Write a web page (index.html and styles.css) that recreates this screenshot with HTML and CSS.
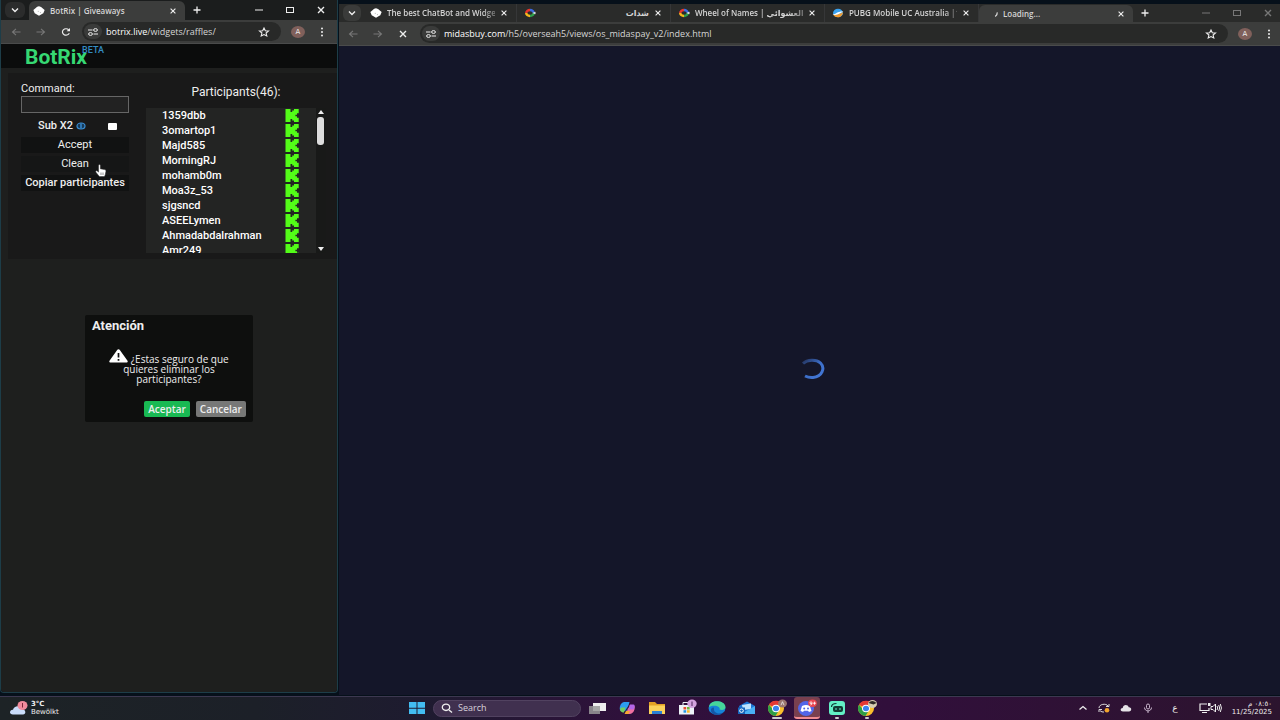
FILE: index.html
```html
<!DOCTYPE html>
<html lang="en">
<head>
<meta charset="utf-8">
<title>BotRix | Giveaways</title>
<link rel="stylesheet" href="styles.css">
</head>
<body>
<svg class="defs" aria-hidden="true">
  <symbol id="chev" viewBox="0 0 10 10"><path d="M2 3.5 5 6.500 8 3.500" fill="none" stroke="currentColor" stroke-width="1.400"/></symbol>
  <symbol id="cube" viewBox="0 0 10 10"><path d="M3.500 1.500 5 1l1.700.6L9.700 4.200 8.600 6.800 5 9 1.400 6.800.3 4.200z" fill="#fff"/><path d="M4 5.300h.8M5.800 6.300h.8" stroke="#999" stroke-width=".6"/></symbol>
  <symbol id="x" viewBox="0 0 10 10"><path d="m2 2 6 6M8 2 2 8" fill="none" stroke="currentColor" stroke-width="1.400"/></symbol>
  <symbol id="plus" viewBox="0 0 10 10"><path d="M5 1.500v7M1.500 5h7" fill="none" stroke="currentColor" stroke-width="1.300"/></symbol>
  <symbol id="min" viewBox="0 0 10 10"><path d="M1 5h8" stroke="currentColor" stroke-width="1"/></symbol>
  <symbol id="max" viewBox="0 0 10 10"><rect x="1.500" y="2.500" width="7" height="5" fill="none" stroke="currentColor"/></symbol>
  <symbol id="back" viewBox="0 0 10 10"><path d="M9.500 5H1.500M5 1.800 1.500 5 5 8.200" fill="none" stroke="currentColor" stroke-width="1.100"/></symbol>
  <symbol id="fwd" viewBox="0 0 10 10"><path d="M.5 5h8M5 1.800 8.500 5 5 8.200" fill="none" stroke="currentColor" stroke-width="1.100"/></symbol>
  <symbol id="reload" viewBox="0 0 10 10"><path d="M8.300 6.300A3.600 3.200 0 1 1 7.700 2.800" fill="none" stroke="currentColor" stroke-width="1.200"/><path d="M9 1v3.300H5.600z" fill="currentColor"/></symbol>
  <symbol id="tune" viewBox="0 0 12 10"><path d="M1 3h4.500M6.500 7H11" stroke="currentColor" stroke-width="1.200"/><ellipse cx="8.500" cy="3" rx="1.900" ry="1.400" fill="none" stroke="currentColor"/><ellipse cx="3.500" cy="7" rx="1.900" ry="1.400" fill="none" stroke="currentColor"/></symbol>
  <symbol id="star" viewBox="0 0 12 12"><path d="m6 2 1.300 2.700 3.200.3-2.400 2 .7 3L6 8.500l-2.800 1.500.7-3L1.500 5l3.200-.3z" fill="none" stroke="currentColor" stroke-width="1.100"/></symbol>
  <symbol id="dots" viewBox="0 0 10 12"><g fill="currentColor"><circle cx="5" cy="2.500" r="1"/><circle cx="5" cy="6" r="1"/><circle cx="5" cy="9.500" r="1"/></g></symbol>
  <symbol id="wheel" viewBox="0 0 12 10"><g fill="none" stroke-width="2.400"><path d="M6 2A3.800 3 0 0 0 2.200 5" stroke="#e8362e"/><path d="M2.200 5A3.800 3 0 0 0 6 8" stroke="#f4b81c"/><path d="M6 8A3.800 3 0 0 0 9.800 5" stroke="#2f9e4c"/><path d="M9.800 5A3.800 3 0 0 0 6 2" stroke="#3d6be0"/></g><path d="m8.500 5 3-1.200v2.400z" fill="#eee"/></symbol>
  <symbol id="planet" viewBox="0 0 12 10"><ellipse cx="6" cy="5" rx="5" ry="4.300" fill="#3aa2ee"/><path d="M1.200 6.300C4 7.200 8 5.800 10.900 4.200 11 7 8.500 9.300 6 9.300 3.500 9.300 1.700 8 1.200 6.300z" fill="#f39a2b"/><path d="M.5 6.600C4 6 6 3 11.300 3.500 8.500 4.500 6 8 .5 6.600z" fill="#fff"/></symbol>
  <symbol id="kick" viewBox="0 0 14 13"><path d="M.5 0h5v3h1.700V1.500H9V0h4.700v4.300H12v1.500h-1.600v1.400H12v1.500h1.700V13H9v-1.500H7.200V10H5.500v3h-5z" fill="#53fc18"/></symbol>
  <symbol id="chrome" viewBox="0 0 20 18"><ellipse cx="9" cy="9.500" rx="8" ry="7.500" fill="#fbc02d"/><path d="M9 9.500 2 5.700A8 7.500 0 0 1 16.300 6H9z" fill="#e53935"/><path d="M2 5.800A8 7.500 0 0 0 8.500 17l3.500-5.800-4.500 1z" fill="#2e9e46"/><ellipse cx="9" cy="9.500" rx="4" ry="3.700" fill="#fff"/><ellipse cx="9" cy="9.500" rx="3" ry="2.800" fill="#3b82f0"/></symbol>
</svg>

<div class="desktop">
  <div class="windows">
    <section class="win left">
      <header class="tabs">
        <button class="drop" aria-label="Search tabs"><svg class="i10"><use href="#chev"/></svg></button>
        <div class="tab on"><svg class="i12"><use href="#cube"/></svg><span class="title">BotRix | Giveaways</span><button class="ic" aria-label="Close tab"><svg class="i8"><use href="#x"/></svg></button></div>
        <button class="new" aria-label="New tab"><svg class="i10"><use href="#plus"/></svg></button>
        <div class="ctl"><button aria-label="Minimize"><svg class="i10"><use href="#min"/></svg></button><button aria-label="Maximize"><svg class="i10"><use href="#max"/></svg></button><button aria-label="Close"><svg class="i10"><use href="#x"/></svg></button></div>
      </header>
      <nav class="bar">
        <button class="nav dim" aria-label="Back"><svg class="i10"><use href="#back"/></svg></button>
        <button class="nav dim" aria-label="Forward"><svg class="i10"><use href="#fwd"/></svg></button>
        <button class="nav" aria-label="Reload"><svg class="i10"><use href="#reload"/></svg></button>
        <div class="pill"><span class="site"><svg class="i12"><use href="#tune"/></svg></span><span class="url"><b>botrix.live</b>/widgets/raffles/</span><button class="ic" aria-label="Bookmark"><svg class="i12"><use href="#star"/></svg></button></div>
        <span class="avatar">A</span>
        <button class="ic menu" aria-label="Menu"><svg class="i12"><use href="#dots"/></svg></button>
      </nav>
      <div class="page">
        <div class="brand"><a href="#" class="logo">BotRix</a><sup>BETA</sup></div>
        <div class="panel">
          <form class="controls">
            <label for="cmd">Command:</label>
            <input id="cmd" type="text">
            <div class="sub"><label for="x2">Sub X2</label><svg class="i10" viewBox="0 0 10 10"><ellipse cx="5" cy="5" rx="4" ry="3" fill="#173a58" stroke="#3a8fd6" stroke-width="1.200"/><path d="M5 2.500v5" stroke="#3a8fd6" stroke-width="1.400"/></svg><input id="x2" type="checkbox"></div>
            <button type="button" class="act">Accept</button>
            <button type="button" class="act clean">Clean
              <svg class="cursor" viewBox="0 0 12 14"><path d="M3.500 1.500c0-1.200 1.900-1.200 1.900 0v3.300l4.200.8c1 .2 1.500.8 1.300 1.900L10.200 11c-.3 1-.8 1.600-1.800 1.600H5.200c-.7 0-1.100-.3-1.500-.9L.9 8.200c-.8-1 .6-1.900 1.400-1.100l1.200 1z" fill="#fff" stroke="#222" stroke-width=".5"/><path d="M6 8.500V11M8 8.500V11" stroke="#444" stroke-width=".6"/></svg>
            </button>
            <button type="button" class="act bold">Copiar participantes</button>
          </form>
          <div class="people">
            <h2>Participants(46):</h2>
            <div class="scroll">
              <ul>
                <li>1359dbb<svg class="k"><use href="#kick"/></svg></li>
                <li>3omartop1<svg class="k"><use href="#kick"/></svg></li>
                <li>Majd585<svg class="k"><use href="#kick"/></svg></li>
                <li>MorningRJ<svg class="k"><use href="#kick"/></svg></li>
                <li>mohamb0m<svg class="k"><use href="#kick"/></svg></li>
                <li>Moa3z_53<svg class="k"><use href="#kick"/></svg></li>
                <li>sjgsncd<svg class="k"><use href="#kick"/></svg></li>
                <li>ASEELymen<svg class="k"><use href="#kick"/></svg></li>
                <li>Ahmadabdalrahman<svg class="k"><use href="#kick"/></svg></li>
                <li>Amr249<svg class="k"><use href="#kick"/></svg></li>
              </ul>
              <div class="track"><i class="up"></i><i class="thumb"></i><i class="down"></i></div>
            </div>
          </div>
        </div>
        <div class="overlay">
          <div class="dialog" role="dialog" aria-labelledby="dt">
            <h3 id="dt">Atención</h3>
            <p><svg class="warn" viewBox="0 0 19 14"><path d="M8 1.200c.7-1.200 2.300-1.200 3 0l7.500 10.500c.6 1-.1 1.800-1 1.800h-16c-.9 0-1.600-.8-1-1.800z" fill="#fff"/><path d="M9.500 4v4.500M9.500 10v1.700" stroke="#111" stroke-width="1.700"/></svg> ¿Estas seguro de que quieres eliminar los participantes?</p>
            <div class="btns"><button class="ok">Aceptar</button><button class="no">Cancelar</button></div>
          </div>
        </div>
      </div>
    </section>

    <section class="win right">
      <header class="tabs">
        <button class="drop" aria-label="Search tabs"><svg class="i10"><use href="#chev"/></svg></button>
        <div class="tab"><svg class="i12"><use href="#cube"/></svg><span class="title">The best ChatBot and Widget</span><button class="ic" aria-label="Close tab"><svg class="i8"><use href="#x"/></svg></button></div>
        <div class="tab"><svg class="i12"><use href="#wheel"/></svg><span class="title" dir="rtl">شدات</span><button class="ic" aria-label="Close tab"><svg class="i8"><use href="#x"/></svg></button></div>
        <div class="tab"><svg class="i12"><use href="#wheel"/></svg><span class="title">Wheel of Names | م العشوائي</span><button class="ic" aria-label="Close tab"><svg class="i8"><use href="#x"/></svg></button></div>
        <div class="tab"><svg class="i12"><use href="#planet"/></svg><span class="title">PUBG Mobile UC Australia |10</span><button class="ic" aria-label="Close tab"><svg class="i8"><use href="#x"/></svg></button></div>
        <div class="tab on"><svg class="i8" viewBox="0 0 10 10"><path d="M4 8Q7 6 6.500 3" fill="none" stroke="#ddd" stroke-width="1.500"/></svg><span class="title">Loading...</span><button class="ic" aria-label="Close tab"><svg class="i8"><use href="#x"/></svg></button></div>
        <button class="new" aria-label="New tab"><svg class="i10"><use href="#plus"/></svg></button>
        <div class="ctl dim"><button aria-label="Minimize"><svg class="i10"><use href="#min"/></svg></button><button aria-label="Maximize"><svg class="i10"><use href="#max"/></svg></button><button aria-label="Close"><svg class="i10"><use href="#x"/></svg></button></div>
      </header>
      <nav class="bar">
        <button class="nav dim" aria-label="Back"><svg class="i10"><use href="#back"/></svg></button>
        <button class="nav dim" aria-label="Forward"><svg class="i10"><use href="#fwd"/></svg></button>
        <button class="nav" aria-label="Stop"><svg class="i10"><use href="#x"/></svg></button>
        <div class="pill"><span class="site"><svg class="i12"><use href="#tune"/></svg></span><span class="url"><b>midasbuy.com</b>/h5/overseah5/views/os_midaspay_v2/index.html</span><button class="ic" aria-label="Bookmark"><svg class="i12"><use href="#star"/></svg></button></div>
        <span class="avatar">A</span>
        <button class="ic menu" aria-label="Menu"><svg class="i12"><use href="#dots"/></svg></button>
      </nav>
      <div class="loading">
        <svg class="spinner" viewBox="0 0 26 22"><defs><linearGradient id="sg" x1="0" y1="0" x2="1" y2="1"><stop offset="0" stop-color="#24345e"/><stop offset=".5" stop-color="#3c6ec8"/><stop offset="1" stop-color="#4479d8"/></linearGradient></defs><path d="M3 5.500C7 1.500 16 .8 20.500 5c5 5 1.500 14-7.500 14.500-3 .2-5.500-.3-8-1.500" fill="none" stroke="url(#sg)" stroke-width="3"/></svg>
      </div>
    </section>
  </div>

  <footer class="taskbar">
    <div class="weather">
      <svg class="cloud" viewBox="0 0 20 16"><path d="M4 14.500C-.5 14.500.5 9.500 4 9.700 5 5 12 5 13 9.500c4-.5 4.500 5 1 5z" fill="#c9dcfa"/><ellipse cx="13.500" cy="5.500" rx="5" ry="4.500" fill="#f28b9c"/><path d="M13.500 3v4.500" stroke="#7d2739"/></svg>
      <div><b>3°C</b><br>Bewölkt</div>
    </div>
    <div class="apps">
      <svg class="app" viewBox="0 0 20 18"><path d="M2 3h7.500v5.700H2zM10.500 3H18v5.700h-7.500zM2 9.700h7.500V15H2zM10.500 9.700H18V15h-7.500z" fill="#43bdf1"/></svg>
      <label class="search"><svg class="i12" viewBox="0 0 12 12"><ellipse cx="5" cy="5.300" rx="3.700" ry="3.200" fill="none" stroke="#eee" stroke-width="1.300"/><path d="m8 8 3 2.500" stroke="#eee" stroke-width="1.400"/></svg><input type="text" placeholder="Search" aria-label="Search"></label>
      <svg class="app" viewBox="0 0 20 18"><path d="M6 4h13v8H6z" fill="#eee"/><path d="M2 7h11v8H2z" fill="#999" opacity=".85"/></svg>
      <svg class="app" viewBox="0 0 20 18"><path d="M7 3h5.500L10 12H4.500C1 12 3 3 7 3z" fill="#2d9df0"/><path d="M4 8.500h4.500L7 13.500C3.500 13.500 2 11 4 8.500z" fill="#72cf5e"/><path d="M12.500 6H16c3.500 0 1.500 9-3 9H8l2-3z" fill="#ef70a0"/><path d="M9 12h4l-1.500 3H7.500z" fill="#f6a832"/><path d="M13 5.500h3.500c2 .5 1 3.500 0 5h-5z" fill="#b566e8"/><path d="M11.500 6.500h1.300L9.200 12H8z" fill="#2c1740"/></svg>
      <svg class="app" viewBox="0 0 20 18"><path d="M2 3h6l2 2h8v3H2z" fill="#e4a125"/><path d="M2 6.500h16V15H2z" fill="#fbd25b"/><path d="M5 12h10v3H5z" fill="#2b7fd6"/></svg>
      <svg class="app" viewBox="0 0 20 18"><path d="M2 6h15v9.500H2z" fill="#edf3f8"/><path d="M6 6V3.500h6" fill="none" stroke="#edf3f8"/><path d="M6.500 8h2.700v2.500H6.500z" fill="#e84d32"/><path d="M10 8h2.700v2.500H10z" fill="#70b73c"/><path d="M6.500 11.200h2.700v2.500H6.500z" fill="#2496e2"/><path d="M10 11.200h2.700v2.500H10z" fill="#f7b928"/><ellipse cx="15" cy="4.700" rx="4.700" ry="4.200" fill="#d3a3df"/><path d="M15 2.500V7" stroke="#4d245a"/></svg>
      <svg class="app" viewBox="0 0 20 18"><ellipse cx="10" cy="9" rx="8.500" ry="6.800" fill="#1684d8"/><path d="M2 8c1-8 16-7 16.500 0 0 3-3.500 3.500-6 2.500C14 8 8 5 2 8z" fill="#46d69a"/><path d="M7 9c-1 5 5 7 9 4.500-4 5-13 2-12-3C4.500 9 6 8 7 9z" fill="#1556a5"/></svg>
      <svg class="app" viewBox="0 0 20 18"><path d="m2 7 8-4.500L18 7v8H4z" fill="#1c75d4"/><path d="m5 6 9-1.500V10L6 11z" fill="#bfe4ff"/><path d="m4 15 14-8v8z" fill="#49b0f5"/><path d="M1 8.500h7V15H1z" fill="#1666be"/><ellipse cx="4.500" cy="11.700" rx="1.800" ry="1.700" fill="none" stroke="#fff"/></svg>
      <span class="slot run"><svg class="app" viewBox="0 0 20 18"><use href="#chrome"/><ellipse cx="15.500" cy="4.500" rx="4.500" ry="4" fill="#9d7770"/><path d="m14 6.200 1.500-3.500L17 6.200" fill="none" stroke="#eee" stroke-width=".8"/></svg></span>
      <span class="slot alert"><svg class="app" viewBox="0 0 20 18"><ellipse cx="9" cy="9.500" rx="8" ry="7.500" fill="#5366e8"/><path d="M5 7q4-2 8 0l1.500 5-2.500 1-1-1.200H7L6 13l-2.500-1z" fill="#fff"/><circle cx="7.200" cy="9.500" r="1" fill="#5366e8"/><circle cx="11" cy="9.500" r="1" fill="#5366e8"/><ellipse cx="15.500" cy="4.200" rx="4.300" ry="3.700" fill="#ec4650"/><ellipse cx="14" cy="3.800" rx="1" ry="1" fill="none" stroke="#fff" stroke-width=".8"/><path d="M15 4q0 2-1.500 2M16 4.200h3M17.500 2.700v3" fill="none" stroke="#fff" stroke-width=".8"/></svg></span>
      <span class="slot run small"><svg class="app" viewBox="0 0 20 18"><rect x="2" y="2" width="16" height="14" rx="3" fill="#63efc6"/><rect x="6" y="7" width="10" height="6" rx="2" fill="#123b35"/><path d="M4.500 8q0-3.500 5-3.500" fill="none" stroke="#123b35" stroke-width="1.200"/><path d="M9 9v2M13 9v2" stroke="#63efc6"/></svg></span>
      <span class="slot run small"><svg class="app" viewBox="0 0 20 18"><use href="#chrome"/><ellipse cx="15.500" cy="5" rx="4.500" ry="4" fill="#d6cdb2"/><path d="M11.500 4Q15 0 19.500 4l-3 1.500z" fill="#2d2926"/></svg></span>
    </div>
    <div class="tray">
      <svg class="i10" viewBox="0 0 10 10"><path d="m1.500 6.500 3.500-3 3.500 3" fill="none" stroke="#eee" stroke-width="1.300"/></svg>
      <svg class="i12" viewBox="0 0 12 10"><path d="M1 5C1 1 8 0 10 3M11 1v2.500H8M1 9V6.500h3M2 7.500C3 9 5 9 6 9" fill="none" stroke="#ddd"/><circle cx="9" cy="7.200" r="2.300" fill="#f3a42b"/></svg>
      <svg class="i12" viewBox="0 0 12 10"><path d="M3 8.500C0 8.500 0 5 2.700 5 3 1 8 1 8.700 4.300 12 4 12 8.500 9 8.500z" fill="#e6e3e8"/></svg>
      <svg class="i12" viewBox="0 0 12 12"><rect x="4.500" y="2" width="3" height="5" rx="1.500" fill="none" stroke="#cbb9cf"/><path d="M2.500 5.500C2.500 10 9.500 10 9.500 5.500M6 9v2" fill="none" stroke="#cbb9cf"/></svg>
      <span class="lang">ع</span>
      <svg class="i12" viewBox="0 0 12 12"><path d="M8 2H1v6.500h9V6M3 10.500h5" fill="none" stroke="#eee" stroke-width="1.200"/><path d="M9 1h2.500v3H9z" fill="#eee"/></svg>
      <svg class="i12 vol" viewBox="0 0 12 12"><path d="M1 4.500h2L5.500 2v8L3 7.500H1zM7 4q1.500 2 0 4M8.700 3q2 3 0 6M10.300 2q2.300 4 0 8" fill="none" stroke="#eee"/></svg>
      <div class="clock"><span dir="rtl">٠٨:٥٠ م</span><span>11/25/2025</span></div>
    </div>
  </footer>
</div>
</body>
</html>
```
FILE: styles.css
```css
* { box-sizing: border-box; }
body { margin: 0; background: #06101a; color: #eee; font: 11px/12px Roboto, "Noto Sans", sans-serif; }
button, input { font: inherit; color: inherit; }
button { border: 0; padding: 0; background: none; }
svg { display: block; flex: none; }
.defs { position: absolute; width: 0; height: 0; }
.i8 { width: 8px; height: 8px; }
.i10 { width: 10px; height: 10px; }
.i12 { width: 12px; height: 12px; }

.desktop { height: 100vh; display: flex; flex-direction: column; }
.windows { flex: 1; min-height: 0; display: flex; }
.win { display: flex; flex-direction: column; min-width: 0; overflow: hidden; }
.left { width: 26.4%; margin-bottom: 3px; border: 1px solid #1d3d48; border-top: 0; border-radius: 0 0 4px 4px; }
.right { flex: 1; margin: 4px 0 1px 1px; background: #141629; }

/* browser chrome */
.tabs { display: flex; align-items: stretch; height: 20px; background: #1b1d1d; font: 8px/12px "Open Sans", "DejaVu Sans", sans-serif; flex: none; }
.right .tabs { height: 18px; background: #2a2b2a; }
.drop { width: 20px; margin: 2px 4px; border-radius: 6px; display: grid; place-items: center; background: #2b2c2c; }
.right .drop { width: 18px; margin: 1px 2px 1px 4px; background: #3a3b3a; }
.tab { display: flex; align-items: center; gap: 5px; width: 154px; padding: 0 8px 0 7px; }
.left .tab { width: 156px; padding: 0 8px 0 4px; }
.tab.on { background: #3c3d3c; border-radius: 6px 6px 0 0; margin-top: 1px; }
.right .tab.on { padding-left: 13px; gap: 3px; }
.right .tab:not(.on) { border-right: 1px solid #363738; }
.title { flex: 1; min-width: 0; overflow: hidden; white-space: nowrap; font-weight: 600; color: #d4d4d4; }
.tab:not(.on) .title:not([dir]) { mask-image: linear-gradient(to right, #000 88%, #0006); }
.ic { display: grid; place-items: center; }
.new { width: 24px; display: grid; place-items: center; }
.ctl { margin-left: auto; display: flex; }
.right .ctl { margin-right: -3px; }
.ctl button { width: 31px; display: grid; place-items: center; }
.dim { color: #777; }
.bar { display: flex; align-items: center; height: 24px; padding: 0 9px 0 2px; background: #3c3d3c; border-bottom: 1px solid #4a4b4b; flex: none; }
.right .bar { padding-right: 5px; }
.nav { width: 25px; display: grid; place-items: center; }
.pill { flex: 1; min-width: 0; margin-left: 4px; height: 19px; border-radius: 10px; background: #282928; display: flex; align-items: center; gap: 4px; padding: 0 11px 0 2px; }
.site { width: 18px; height: 15px; border-radius: 8px; background: #3a3b3a; display: grid; place-items: center; }
.url { flex: 1; white-space: nowrap; overflow: hidden; font: 9px/12px "Open Sans", sans-serif; color: #d6d6d6; }
.url b { font-weight: 400; color: #fff; }
.avatar { width: 14px; height: 12px; margin: 0 11px 0 10px; border-radius: 50%; background: #80605b; font: 7px/12px "DejaVu Sans", sans-serif; text-align: center; }

/* giveaways page */
.page { position: relative; flex: 1; background: #1e1f1e; }
.brand { height: 24px; padding-left: 24px; background: #0b0c0c; display: flex; align-items: flex-start; }
.logo { font: 700 21px/26px Roboto, sans-serif; color: #36d873; text-decoration: none; }
sup { margin-left: -5px; font: 500 9px/12px Roboto, sans-serif; color: #348cc4; }
.panel { margin: 5px 0 0 7px; padding: 10px 11px 6px 13px; background: #191919; display: flex; gap: 17px; }
.controls { width: 108px; display: flex; flex-direction: column; }
#cmd { width: 100%; height: 17px; margin-top: 1px; border: 1px solid #666; background: #222; }
.sub { display: flex; align-items: center; height: 16px; margin: 5px 0 3px; padding: 0 12px 0 17px; gap: 3px; font-weight: 500; }
#x2 { appearance: none; width: 9px; height: 7px; margin: 0 0 0 auto; background: #fff; border-radius: 1px; }
.act { height: 16px; margin-bottom: 3px; background: #111212; line-height: 16px; white-space: nowrap; position: relative; }
.clean { background: #151616; }
.bold { font-weight: 500; }
.cursor { position: absolute; left: 74px; top: 8px; width: 12px; height: 14px; z-index: 1; }
.people { flex: 1; min-width: 0; }
h2 { margin: 2px 0 8px; font: 12px/15px Roboto, sans-serif; text-align: center; }
.scroll { display: flex; height: 145px; }
ul { flex: 1; margin: 0; padding: 0; list-style: none; overflow: hidden; background: #232423; }
li { height: 15px; line-height: 15px; padding: 0 17px 0 16px; font-weight: 500; color: #fff; display: flex; align-items: center; justify-content: space-between; }
.k { width: 14px; height: 13px; }
.track { width: 10px; display: flex; flex-direction: column; align-items: center; background: #181918; }
.up, .down { border: 3px solid transparent; }
.up { border-bottom: 4px solid #eee; border-top: 0; margin: 2px 0 3px; }
.down { border-top: 4px solid #eee; border-bottom: 0; margin: auto 0 2px; }
.thumb { width: 7px; height: 28px; border-radius: 3px; background: #ddd; }
.overlay { position: absolute; inset: 0; display: flex; align-items: center; justify-content: center; }
.dialog { width: 50%; padding: 4px 7px 5px; background: #0e0f0e; border-radius: 2px; }
h3 { margin: 0; font: 700 13px/14px Roboto, sans-serif; }
.dialog p { margin: 16px 9px 17px; font: 10px/10px "Open Sans", sans-serif; text-align: center; }
.warn { display: inline-block; width: 19px; height: 14px; }
.btns { display: flex; justify-content: flex-end; gap: 6px; font: 600 10px/16px "Open Sans", sans-serif; }
.btns button { height: 16px; padding: 0 4px; border-radius: 2px; }
.ok { background: #19b953; }
.no { background: #777877; }

.loading { flex: 1; display: grid; place-items: center; padding: 0 0 4px 8px; }
.spinner { width: 26px; height: 22px; }

/* taskbar */
.taskbar { flex: none; height: 24px; padding-bottom: 1px; display: grid; grid-template-columns: 1fr auto 1fr; align-items: center; border-top: 1px solid #3c3850; background: linear-gradient(90deg, #1d2326 0, #1c2028 20%, #1e1b30 33%, #30103c 50%, #310f3b 70%, #2c142e 100%); font: 8px/8px "DejaVu Sans", sans-serif; }
.weather { display: flex; align-items: center; gap: 2px; padding-left: 9px; font-size: 7px; }
.cloud { width: 20px; height: 16px; }
.apps { display: flex; align-items: center; gap: 10px; padding-left: 4px; }
.app { width: 20px; height: 18px; }
.search { width: 148px; height: 17px; margin: 0 -4px; border-radius: 9px; background: #40304f; border: 1px solid #514260; display: flex; align-items: center; gap: 5px; padding: 0 7px; }
.search input { width: 100%; min-width: 0; padding: 0; border: 0; background: none; font: 9px/12px "Open Sans", sans-serif; }
.search input::placeholder { color: #d8d2dc; opacity: 1; }
.slot { height: 22px; padding-top: 2px; border-bottom: 2px solid transparent; position: relative; }
.slot.run::after { content: ""; position: absolute; left: 5px; right: 5px; bottom: -2px; height: 2px; border-radius: 1px; background: #ccc; }
.slot.small::after { left: 8px; right: 8px; }
.slot.alert { margin: 0 -3px; padding-left: 3px; padding-right: 3px; background: #79404f; border-bottom-color: #f08b91; border-radius: 3px; }
.tray { display: flex; align-items: center; justify-content: flex-end; gap: 10px; padding-right: 8px; }
.lang { margin: 0 11px 0 8px; font-size: 9px; }
.vol { margin-left: -11px; }
.clock { display: flex; flex-direction: column; align-items: flex-end; font-size: 7px; }
```
